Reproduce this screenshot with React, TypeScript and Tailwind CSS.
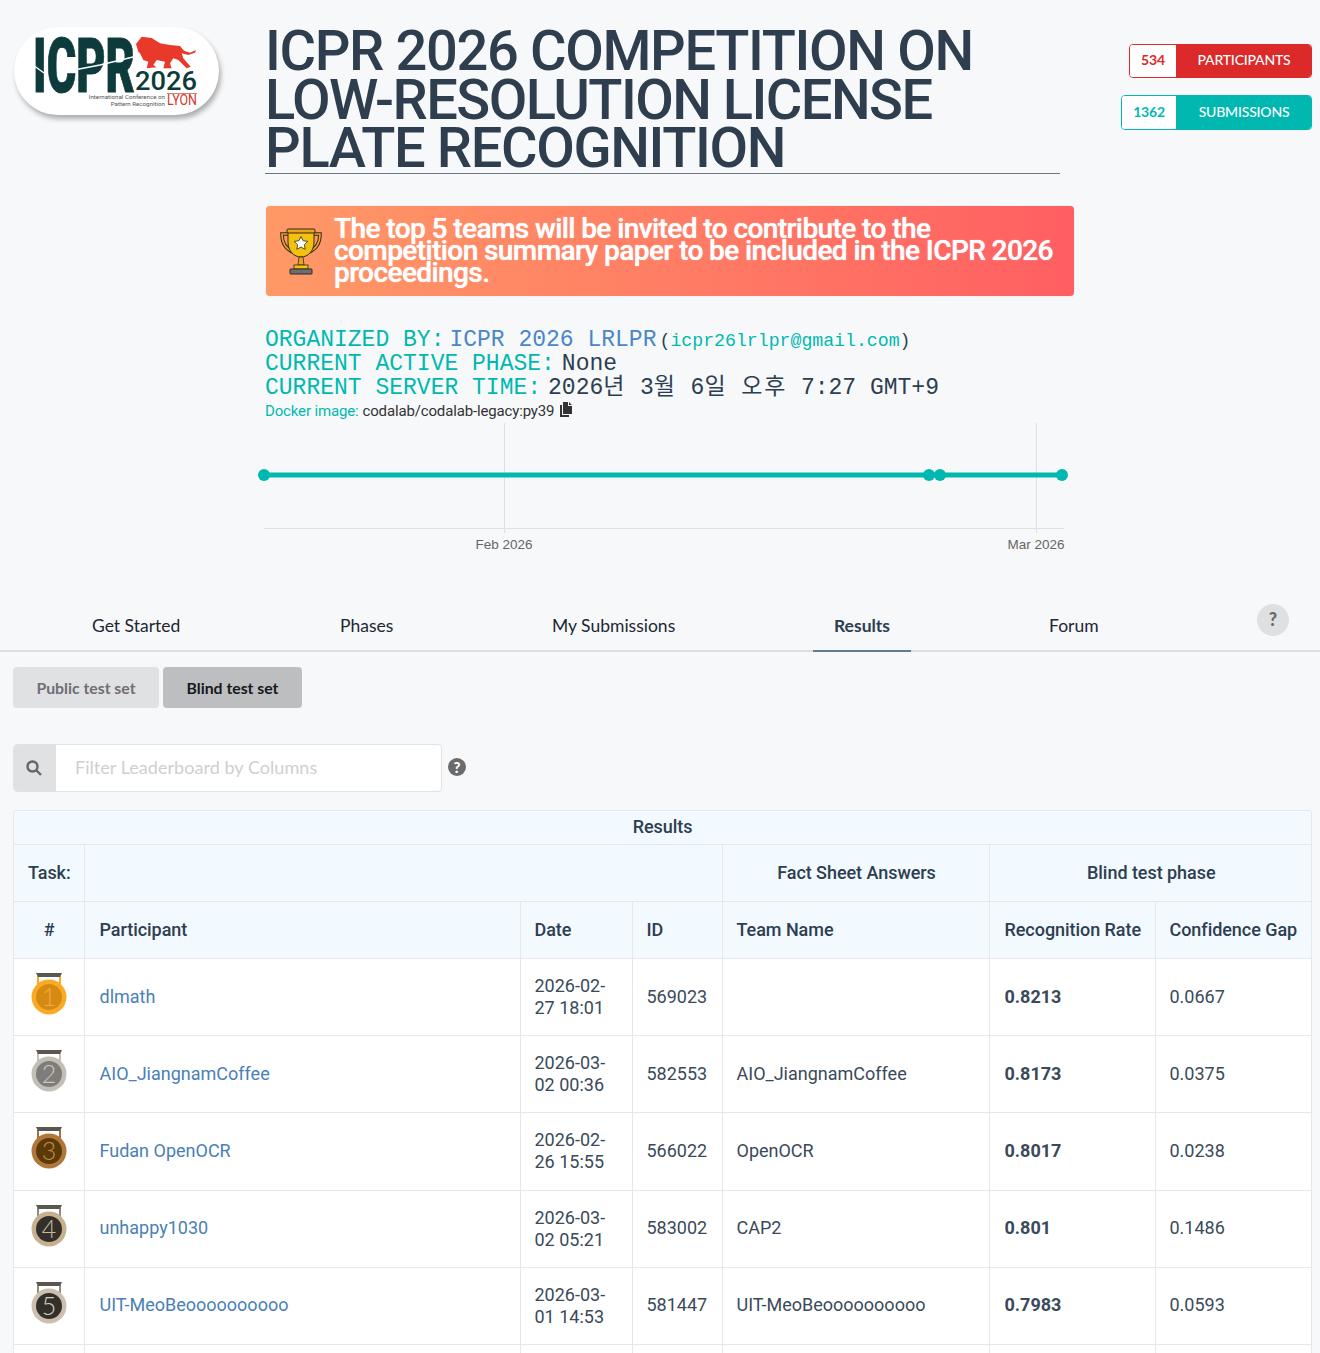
import React from "react";

const roboto = "font-['Roboto',sans-serif]";
const lato = "font-['Lato',sans-serif]";
const mono = "font-['Liberation_Mono','Noto_Sans_CJK_KR',monospace]";

function Logo() {
  return (
    <div className="w-[205px] h-[88px] rounded-[44px] bg-white shadow-[2px_4px_5px_rgba(0,0,0,0.3)] mt-[27px] ml-[14px] shrink-0">
      <svg width="205" height="88" viewBox="0 0 205 88">
        <text x="19" y="65" fontFamily="Roboto, sans-serif" fontWeight="900" fontSize="76" fill="#0d3b3b" stroke="#0d3b3b" strokeWidth="1" textLength="102" lengthAdjust="spacingAndGlyphs">ICPR</text>
        <path d="M19 38l11 8M60 43l26-5 33-8" stroke="#fff" strokeWidth="1.4" fill="none" />
        <g transform="translate(-14,-17) scale(0.33333)">
          <path d="M408 102 L425 80 L455 84 L480 100 L510 105 L540 108 L552 122 L570 128 L588 120 L585 128 L565 135 L545 130 L550 145 L572 170 L560 175 L535 150 L520 145 L510 160 L515 175 L490 175 L495 155 L470 150 L460 165 L470 172 L440 175 L445 155 L430 150 L420 130 L415 125 Z" fill="#e8392b" />
        </g>
        <text x="121" y="63" fontFamily="Roboto, sans-serif" fontWeight="500" fontSize="25" fill="#0d3b3b" textLength="62" lengthAdjust="spacingAndGlyphs">2026</text>
        <line x1="153" y1="66.5" x2="183" y2="66.5" stroke="#c9453a" strokeWidth="0.7" />
        <text x="151" y="72" textAnchor="end" fontFamily="Roboto, sans-serif" fontSize="6.2" fill="#555">International Conference on</text>
        <text x="151" y="79" textAnchor="end" fontFamily="Roboto, sans-serif" fontSize="6.2" fill="#555">Pattern Recognition</text>
        <text x="153" y="78" fontFamily="Roboto, sans-serif" fontSize="15" fill="#d0392b" textLength="30" lengthAdjust="spacingAndGlyphs">LYON</text>
      </svg>
    </div>
  );
}

function Trophy() {
  return (
    <svg width="42" height="48" viewBox="0 0 42 48" className="shrink-0">
      <path d="M9 7H2c0 10 4 15 11 18M33 7h7c0 10-4 15-11 18" fill="none" stroke="#2e2a25" strokeWidth="3.6" />
      <path d="M9 7H2c0 10 4 15 11 18M33 7h7c0 10-4 15-11 18" fill="none" stroke="#f2a21a" strokeWidth="1.6" />
      <path d="M8 5h26v10c0 9-6 15-13 15S8 24 8 15z" fill="#f4c20d" stroke="#2e2a25" strokeWidth="1" />
      <rect x="7" y="2" width="28" height="4" rx="1" fill="#f2a21a" stroke="#2e2a25" strokeWidth="1" />
      <path d="M21 9.5l2.1 4.2 4.7.7-3.4 3.3.8 4.6-4.2-2.2-4.2 2.2.8-4.6-3.4-3.3 4.7-.7z" fill="#fff" stroke="#2e2a25" strokeWidth="0.8" />
      <path d="M19 30h4l1 8h-6z" fill="#f2a21a" stroke="#2e2a25" strokeWidth="0.8" />
      <rect x="14" y="38" width="14" height="4" fill="#f4c20d" stroke="#2e2a25" strokeWidth="0.8" />
      <rect x="10" y="42" width="22" height="5" rx="0.5" fill="#6e6e6e" stroke="#2e2a25" strokeWidth="1" />
    </svg>
  );
}

function Medal({ n, ring, inner, digit, ribbon }: { n: number; ring: string; inner: string; digit: string; ribbon: string }) {
  return (
    <svg width="36" height="50" viewBox="0 0 36 50" className="block mx-auto translate-y-[1px]">
      <path d="M7 3v12M29 3v12" stroke={ribbon} strokeWidth="2" />
      <path d="M5 0h26l-2 4H7z" fill="#5b5750" />
      <circle cx="18" cy="24" r="17.5" fill={ring} />
      <circle cx="18" cy="24" r="13" fill={inner} />
      <text x="18" y="33" textAnchor="middle" fontFamily="Lato, sans-serif" fontWeight="300" fontSize="25" fill={digit}>{n}</text>
    </svg>
  );
}

const medals = [
  { ring: "#fbaa26", inner: "#d58a12", digit: "#f7a93a", ribbon: "#fbaa26" },
  { ring: "#c3bfb6", inner: "#7f7d7a", digit: "#c9c6c0", ribbon: "#c3bfb6" },
  { ring: "#b0763a", inner: "#5a3a08", digit: "#c98a45", ribbon: "#a8703a" },
  { ring: "#c7b08f", inner: "#33302a", digit: "#c7b8a0", ribbon: "#8f8a80" },
  { ring: "#cdbfb0", inner: "#33302a", digit: "#d8cfc4", ribbon: "#8f8a80" },
];

const rows = [
  ["dlmath", "2026-02-27 18:01", "569023", "", "0.8213", "0.0667", "h-[77px]", ""],
  ["AIO_JiangnamCoffee", "2026-03-02 00:36", "582553", "AIO_JiangnamCoffee", "0.8173", "0.0375", "h-[77px]", ""],
  ["Fudan OpenOCR", "2026-02-26 15:55", "566022", "OpenOCR", "0.8017", "0.0238", "h-[78px]", "pb-[2px]"],
  ["unhappy1030", "2026-03-02 05:21", "583002", "CAP2", "0.801", "0.1486", "h-[77px]", "pb-[2px]"],
  ["UIT-MeoBeoooooooooo", "2026-03-01 14:53", "581447", "UIT-MeoBeoooooooooo", "0.7983", "0.0593", "h-[77px]", "pb-[2px]"],
];

const cell = "border-r border-b border-[#e5e7ea] pl-[15px] pr-[13px] align-middle last:border-r-0";
const cellTight = "border-r border-b border-[#e5e7ea] pl-[14px] pr-[13px] align-middle last:border-r-0";

function Timeline() {
  return (
    <svg width="830" height="130" viewBox="0 0 830 130" className="block overflow-visible">
      <line x1="244.5" y1="0" x2="244.5" y2="110" stroke="#e0e0e0" />
      <line x1="776.5" y1="0" x2="776.5" y2="110" stroke="#e0e0e0" />
      <line x1="4" y1="105.5" x2="804" y2="105.5" stroke="#e0e0e0" />
      <line x1="4" y1="52" x2="802" y2="52" stroke="#00b8b0" strokeWidth="5" />
      {[4, 669, 680, 802].map((x) => (
        <circle key={x} cx={x} cy="52" r="6" fill="#00b8b0" />
      ))}
      <text x="244" y="126" textAnchor="middle" fontFamily="'Liberation Sans', sans-serif" fontSize="13.5" fill="#666">Feb 2026</text>
      <text x="776" y="126" textAnchor="middle" fontFamily="'Liberation Sans', sans-serif" fontSize="13.5" fill="#666">Mar 2026</text>
    </svg>
  );
}

export default function App() {
  return (
    <div className={`w-[1320px] h-[1353px] overflow-hidden bg-[#f7f8fa] text-[#2d3e50] ${roboto}`}>
      <div className="flex h-[600px]">
        <div className="w-[265px] shrink-0"><Logo /></div>
        <div className="w-[830px] shrink-0">
          <h1 className="w-[795px] mt-[27px] h-[147px] border-b border-[#6b7680] text-[56px] leading-[48.5px] font-medium tracking-[-1.35px] text-[#2f3e4e]">
            ICPR 2026 COMPETITION ON<br /><span className="tracking-[-1.55px]">LOW-RESOLUTION LICENSE</span><br />PLATE RECOGNITION
          </h1>
          <div className="mt-[32px] ml-px w-[808px] h-[90px] rounded-[4px] bg-gradient-to-r from-[#ff9966] to-[#ff5e62] flex items-center pl-[14px] pr-[12px] gap-[12px] shadow-[0_0_1px_rgba(0,0,0,0.3)]">
            <Trophy />
            <p className="text-white text-[28px] leading-[22px] font-medium tracking-[-0.58px] [text-shadow:0_0_1px_#fff]">
              The top 5 teams will be invited to contribute to the competition summary paper to be included in the ICPR 2026 proceedings.
            </p>
          </div>
          <div className={`mt-[33px] text-[23px] leading-[23.5px] ${mono}`}>
            <div className="whitespace-nowrap"><span className="text-[#00b8b0] mr-[5px]">ORGANIZED BY:</span><span className="text-[#4a86c8] mr-[3px]">ICPR 2026 LRLPR</span><span className="text-[18.2px]">(<span className="text-[#00b8b0]">icpr26lrlpr@gmail.com</span>)</span></div>
            <div className="whitespace-nowrap -mt-[1px]"><span className="text-[#00b8b0] mr-[7px]">CURRENT ACTIVE PHASE:</span>None</div>
            <div className="whitespace-nowrap mt-[1px]"><span className="text-[#00b8b0] mr-[7px]">CURRENT SERVER TIME:</span>2026<span className="tracking-[1.8px]">년</span> 3<span className="tracking-[1.8px]">월</span> 6<span className="tracking-[1.8px]">일</span> <span className="tracking-[1.8px]">오후</span> 7:27 GMT+9</div>
          </div>
          <div className="text-[15px] leading-[18px] mt-[1px] text-[#333] flex items-center tracking-[-0.15px]">
            <span className="text-[#00b8b0] mr-[4px]">Docker image:</span>codalab/codalab-legacy:py39
            <svg width="14" height="15" viewBox="0 0 14 15" className="ml-[5px] -mt-[2px]"><path d="M4 0h5v4h4v8H4z" fill="#333" /><path d="M10 0l3 3h-3zM1 3h2v10h7v2H1z" fill="#333" /></svg>
          </div>
          <div className="mt-[3px] -ml-[5px]"><Timeline /></div>
        </div>
        <div className="flex-1 pr-[8px] pt-[44px] flex flex-col items-end gap-[17px]">
          <Badge n="534" label="PARTICIPANTS" color="#dc2a2a" numW="w-[46px]" labelW="w-[136px]" h="h-[34px]" pad="pb-[3px]" />
          <Badge n="1362" label="SUBMISSIONS" color="#00b8b0" numW="w-[54px]" labelW="w-[136px]" h="h-[35px]" pad="pb-[2px]" />
        </div>
      </div>

      <div className={`h-[52px] border-b-2 border-[#dcdee0] relative ${lato} text-[17.5px] text-[#1b2733]`}>
        <span className="absolute left-[92px] top-[13px]">Get Started</span>
        <span className="absolute left-[340px] top-[13px]">Phases</span>
        <span className="absolute left-[552px] top-[13px]">My Submissions</span>
        <span className="absolute left-[813px] w-[98px] h-[52px] text-center pt-[13px] border-b-2 border-[#5f7d95] font-bold text-[#2d3e50]">Results</span>
        <span className="absolute left-[1049px] top-[13px]">Forum</span>
        <span className="absolute left-[1257px] top-[4px] w-[32px] h-[32px] rounded-full bg-[#dfe0e2] text-[#6b6b6b] text-[18px] font-black flex items-center justify-center pb-[2px]">?</span>
      </div>

      <div className={`flex gap-[4px] pl-[13px] mt-[15px] ${lato} text-[15.8px] font-bold`}>
        <div className="w-[146px] h-[41px] rounded-[4px] bg-[#e0e1e3] text-[#6e6e73] flex items-center justify-center">Public test set</div>
        <div className="w-[139px] h-[41px] rounded-[4px] bg-[#bdbec0] text-[#15181c] flex items-center justify-center">Blind test set</div>
      </div>

      <div className={`flex items-center pl-[13px] mt-[36px] ${lato}`}>
        <div className="w-[429px] h-[48px] flex rounded-[4px] border border-[#e2e3e5] overflow-hidden bg-white">
          <div className="w-[42px] bg-[#e0e1e3] flex items-center justify-center">
            <svg width="16" height="16" viewBox="0 0 16 16" fill="none" stroke="#666" strokeWidth="2.4" className="-ml-[2px]"><circle cx="6.5" cy="6.5" r="5" /><path d="M10.5 10.5L15 15" /></svg>
          </div>
          <div className="pl-[19px] pb-[1px] flex items-center text-[18.1px] text-[#cfcfcf]">Filter Leaderboard by Columns</div>
        </div>
        <svg width="18" height="18" viewBox="0 0 18 18" className="ml-[6px] -mt-[2px]"><circle cx="9" cy="9" r="9" fill="#6b6b6b" /><text x="9" y="14.5" textAnchor="middle" fontFamily="Lato, sans-serif" fontWeight="900" fontSize="15" fill="#fff">?</text></svg>
      </div>

      <div className="mx-[13px] mt-[18px] w-[1299px] border border-[#e5e7ea] border-b-0 rounded-t-[4px] overflow-hidden bg-white">
        <table className="w-[1297px] table-fixed border-collapse text-[18px] text-[#3a4a5a]">
          <colgroup>
            <col className="w-[70px]" />
            <col className="w-[436px]" />
            <col className="w-[112px]" />
            <col className="w-[90px]" />
            <col className="w-[267px]" />
            <col className="w-[166px]" />
            <col className="w-[156px]" />
          </colgroup>
          <thead className="bg-[#f2f9ff] font-medium text-[#2d3e50] tracking-[-0.05px]">
            <tr className="h-[33px]"><th colSpan={7} className="border-b border-[#e5e7ea] font-medium pb-[2px]">Results</th></tr>
            <tr className="h-[57px]">
              <th className={`${cell} !pl-[14px] !pr-0 font-medium text-left`}>Task:</th>
              <th colSpan={3} className={cell}></th>
              <th className={`${cell} font-medium text-center`}>Fact Sheet Answers</th>
              <th colSpan={2} className={`${cell} font-medium text-center border-r-0`}>Blind test phase</th>
            </tr>
            <tr className="h-[57px]">
              {["#", "Participant", "Date", "ID", "Team Name", "Recognition Rate", "Confidence Gap"].map((h, i) => (
                <th key={h} className={`${i === 1 || i === 5 ? cell : cellTight} font-medium ${i === 0 ? "text-center" : "text-left"} whitespace-nowrap`}>{h}</th>
              ))}
            </tr>
          </thead>
          <tbody>
            {rows.map((r, i) => (
              <tr key={r[0]} className={r[6]}>
                <td className={`${cell} !px-0`}><Medal n={i + 1} {...medals[i]} /></td>
                <td className={`${cell} ${r[7]} text-[#4a80b8]`}>{r[0]}</td>
                <td className={`${cellTight} leading-[22px]`}>{r[1].slice(0, 8)}<br />{r[1].slice(8).trim()}</td>
                <td className={`${cellTight} ${r[7]}`}>{r[2]}</td>
                <td className={`${cellTight} ${r[7]}`}>{r[3]}</td>
                <td className={`${cell} ${r[7]} font-bold`}>{r[4]}</td>
                <td className={`${cellTight} ${r[7]}`}>{r[5]}</td>
              </tr>
            ))}
            <tr className="h-[20px]"><td className={cell}></td><td className={cell}></td><td className={cell}></td><td className={cell}></td><td className={cell}></td><td className={cell}></td><td className={cell}></td></tr>
          </tbody>
        </table>
      </div>
    </div>
  );
}

function Badge({ n, label, color, numW, labelW, h, pad }: { n: string; label: string; color: string; numW: string; labelW: string; h: string; pad: string }) {
  return (
    <div className={`flex ${h} rounded-[4px] overflow-hidden border ${lato} text-[14px] font-medium tracking-[-0.2px]`} style={{ borderColor: color }}>
      <div className={`${numW} ${pad} bg-white flex items-center justify-center font-bold`} style={{ color }}>{n}</div>
      <div className={`${labelW} ${pad} flex items-center justify-center text-white -mr-px`} style={{ background: color }}>{label}</div>
    </div>
  );
}
